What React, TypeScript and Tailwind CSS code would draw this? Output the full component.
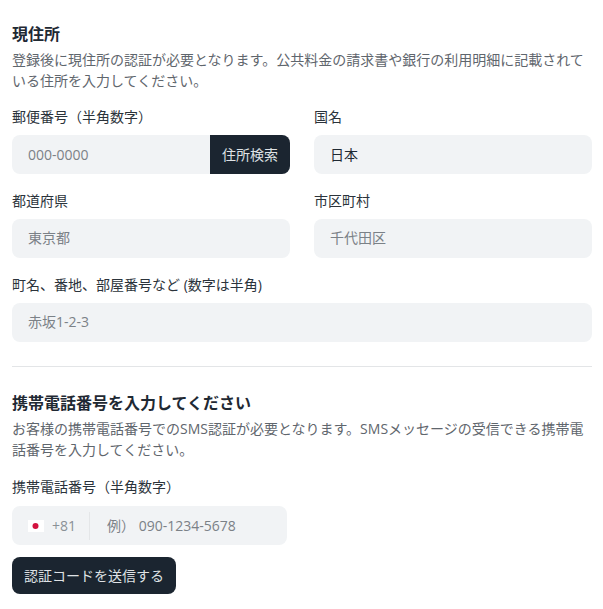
const font = { fontFamily: '"Open Sans", "Noto Sans CJK JP", sans-serif' }

function Field({ label, placeholder, value }: { label: string; placeholder?: string; value?: string }) {
  return (
    <div>
      <label className="block text-[14px] leading-[20px] text-[#2b333b]">{label}</label>
      <input
        type="text"
        readOnly
        value={value}
        placeholder={placeholder}
        className="mt-2 block h-[39px] w-full rounded-lg bg-[#f1f3f5] px-4 pb-[2px] text-[14px] text-[#1f2933] placeholder:text-[#7b8187] outline-none"
      />
    </div>
  )
}

export default function App() {
  return (
    <div style={font} className="min-h-screen bg-white pl-3 pr-[11px] pt-6 text-[#1f2933]">
      <h2 className="text-[16px] leading-[20px] font-semibold">現住所</h2>
      <p className="mt-[5px] text-[14px] leading-[21px] text-[#5f666d]">
        登録後に現住所の認証が必要となります。公共料金の請求書や銀行の利用明細に記載されている住所を入力してください。
      </p>

      <div className="mt-[16px] grid grid-cols-2 gap-x-6 gap-y-[17px]">
        <div>
          <label className="block text-[14px] leading-[20px] text-[#2b333b]">郵便番号（半角数字）</label>
          <div className="mt-2 flex h-[39px] overflow-hidden rounded-lg bg-[#f1f3f5]">
            <input
              type="text"
              readOnly
              placeholder="000-0000"
              className="min-w-0 flex-1 bg-transparent px-4 text-[14px] placeholder:text-[#7b8187] outline-none"
            />
            <button className="w-[80px] shrink-0 bg-[#1b2530] text-[14px] text-[#dfe2e5]">住所検索</button>
          </div>
        </div>
        <Field label="国名" value="日本" />
        <Field label="都道府県" placeholder="東京都" />
        <Field label="市区町村" placeholder="千代田区" />
        <div className="col-span-2">
          <Field label="町名、番地、部屋番号など (数字は半角)" placeholder="赤坂1-2-3" />
        </div>
      </div>

      <hr className="mt-6 border-t border-[#e3e5e7]" />

      <h2 className="mt-[26px] text-[16px] leading-[20px] font-semibold">携帯電話番号を入力してください</h2>
      <p className="mt-[5px] text-[14px] leading-[21px] text-[#5f666d]">
        お客様の携帯電話番号でのSMS認証が必要となります。SMSメッセージの受信できる携帯電話番号を入力してください。
      </p>

      <label className="mt-[17px] block text-[14px] leading-[20px] text-[#2b333b]">携帯電話番号（半角数字）</label>
      <div className="mt-[9px] flex h-[39px] w-[275px] items-center rounded-lg bg-[#f1f3f5] pl-4">
        <svg width="16" height="12" viewBox="0 0 16 12" className="shrink-0">
          <rect width="16" height="12" fill="#ffffff" />
          <circle cx="7.5" cy="6" r="3" fill="#d3123f" />
        </svg>
        <span className="ml-[8px] text-[14px] text-[#8a9096]">+81</span>
        <div className="ml-[13px] h-[28px] w-px bg-[#e4e6e8]" />
        <input
          type="text"
          readOnly
          placeholder="例） 090-1234-5678"
          className="min-w-0 flex-1 bg-transparent pl-[17px] text-[14px] placeholder:text-[#7b8187] outline-none"
        />
      </div>

      <button className="mt-3 block h-[37px] w-[164px] rounded-lg bg-[#1b2530] text-[14px] text-[#dfe2e5]">
        認証コードを送信する
      </button>
    </div>
  )
}
